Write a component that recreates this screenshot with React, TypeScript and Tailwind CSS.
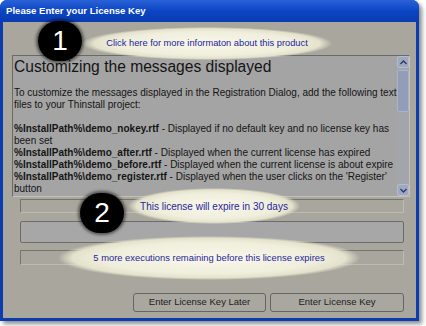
import React from 'react'

const mono = "font-['Liberation_Sans',Arial,sans-serif]"

function Spot({ className, children }: { className: string; children?: React.ReactNode }) {
  return (
    <div
      className={`absolute flex items-center justify-center rounded-[50%] bg-[radial-gradient(ellipse_at_center,#f8f7ea_0%,#f0efdd_50%,#e4e2cb_64%,rgba(226,224,200,0)_71%)] text-[#24249a] whitespace-nowrap ${className}`}
    >
      {children}
    </div>
  )
}

function Badge({ className, n }: { className: string; n: string }) {
  return (
    <div
      className={`absolute flex items-center justify-center w-[44px] h-[40px] rounded-full bg-black text-white text-[28px] shadow-[0_0_3px_2px_rgba(0,0,0,0.5)] ${className}`}
    >
      {n}
    </div>
  )
}

function Line({ bold, rest }: { bold: string; rest: string }) {
  return (
    <div className="whitespace-nowrap">
      <span className="font-bold">{bold}</span>
      {rest}
    </div>
  )
}

export default function App() {
  return (
    <div className={`relative w-[426px] h-[326px] overflow-hidden bg-white ${mono}`}>
      <div className="flex flex-col w-[419px] h-[321px] rounded-t-[7px] bg-[#0b3cb0] px-[3px] pb-[3px] shadow-[3px_3px_4px_rgba(0,0,0,0.45)]">
        <div className="flex items-center h-[22px] px-[3px] bg-gradient-to-b from-[#2a62d8] via-[#0b45c4] to-[#0a3bb0] -mx-[3px] rounded-t-[7px] text-white text-[9.6px] font-bold">
          <span className="pl-[3px]">Please Enter your License Key</span>
        </div>

        <div className="flex flex-col flex-1 bg-[#a8a69d]">
          <div className="flex h-[142px] mt-[33px] ml-[9px] mr-[6px] bg-[#a4a4a4] border border-t-[#6a6a6a] border-l-[#6a6a6a] border-r-[#c2c1ba] border-b-[#c2c1ba] text-[10px] leading-[12px] text-[#141414]">
            <div className="flex-1 pl-[1px] pt-[2px] overflow-hidden">
              <div className="text-[15.6px] leading-[18px] mb-[11px]">Customizing the messages displayed</div>
              <div className="whitespace-nowrap">To customize the messages displayed in the Registration Dialog, add the following text</div>
              <div className="whitespace-nowrap">files to your Thinstall project:</div>
              <div className="h-[12px]" />
              <Line bold="%InstallPath%\demo_nokey.rtf" rest=" - Displayed if no default key and no license key has" />
              <div>been set</div>
              <Line bold="%InstallPath%\demo_after.rtf" rest=" - Displayed when the current license has expired" />
              <Line bold="%InstallPath%\demo_before.rtf" rest=" - Displayed when the current license is about expire" />
              <Line bold="%InstallPath%\demo_register.rtf" rest=" - Displayed when the user clicks on the 'Register'" />
              <div>button</div>
            </div>
            <div className="flex flex-col w-[12px] bg-[#a3a5ab]">
              <div className="flex items-center justify-center h-[12px] rounded-[2px] bg-[#9ea8c0] border border-[#b4bccf]">
                <svg width="7" height="5" viewBox="0 0 7 5"><path d="M0.5 4 L3.5 1 L6.5 4" fill="none" stroke="#2a3a6a" strokeWidth="1.4" /></svg>
              </div>
              <div className="h-[42px] mt-[2px] rounded-[2px] bg-[#929db8] border border-[#aab3c8]" />
              <div className="flex-1" />
              <div className="flex items-center justify-center h-[12px] rounded-[2px] bg-[#9ea8c0] border border-[#b4bccf]">
                <svg width="7" height="5" viewBox="0 0 7 5"><path d="M0.5 1 L3.5 4 L6.5 1" fill="none" stroke="#2a3a6a" strokeWidth="1.4" /></svg>
              </div>
            </div>
          </div>

          <div className="h-[14px] mt-[2px] ml-[17px] mr-[12px] border border-t-[#747470] border-l-[#747470] border-r-[#bdbcb4] border-b-[#bdbcb4]" />
          <div className="h-[22px] mt-[8px] ml-[17px] mr-[12px] rounded-[2px] bg-[#a7a7a7] border border-[#6c6c6c]" />
          <div className="h-[15px] mt-[7px] ml-[17px] mr-[12px] border border-t-[#747470] border-l-[#747470] border-r-[#bdbcb4] border-b-[#bdbcb4]" />

          <div className="flex justify-end gap-[4px] mt-[28px] mr-[12px]">
            <button className="w-[133px] h-[19px] rounded-[3px] bg-[#a9a8a0] border border-[#656565] text-[9.5px] text-[#1c1c1c]">
              Enter License Key Later
            </button>
            <button className="w-[134px] h-[19px] rounded-[3px] bg-[#a9a8a0] border border-[#656565] text-[9.5px] text-[#1c1c1c]">
              Enter License Key
            </button>
          </div>
        </div>
      </div>

      <Spot className="left-[82px] top-[27px] w-[250px] h-[33px] text-[9.3px]">Click here for more informaton about this product</Spot>
      <Badge className="left-[38px] top-[21px]" n="1" />
      <Spot className="left-[128px] top-[188px] w-[172px] h-[36px] text-[10px]">This license will expire in 30 days</Spot>
      <Spot className="left-[58px] top-[236px] w-[302px] h-[44px] text-[9.4px]">5 more executions remaining before this license expires</Spot>
      <Badge className="left-[80px] top-[193px]" n="2" />
    </div>
  )
}
